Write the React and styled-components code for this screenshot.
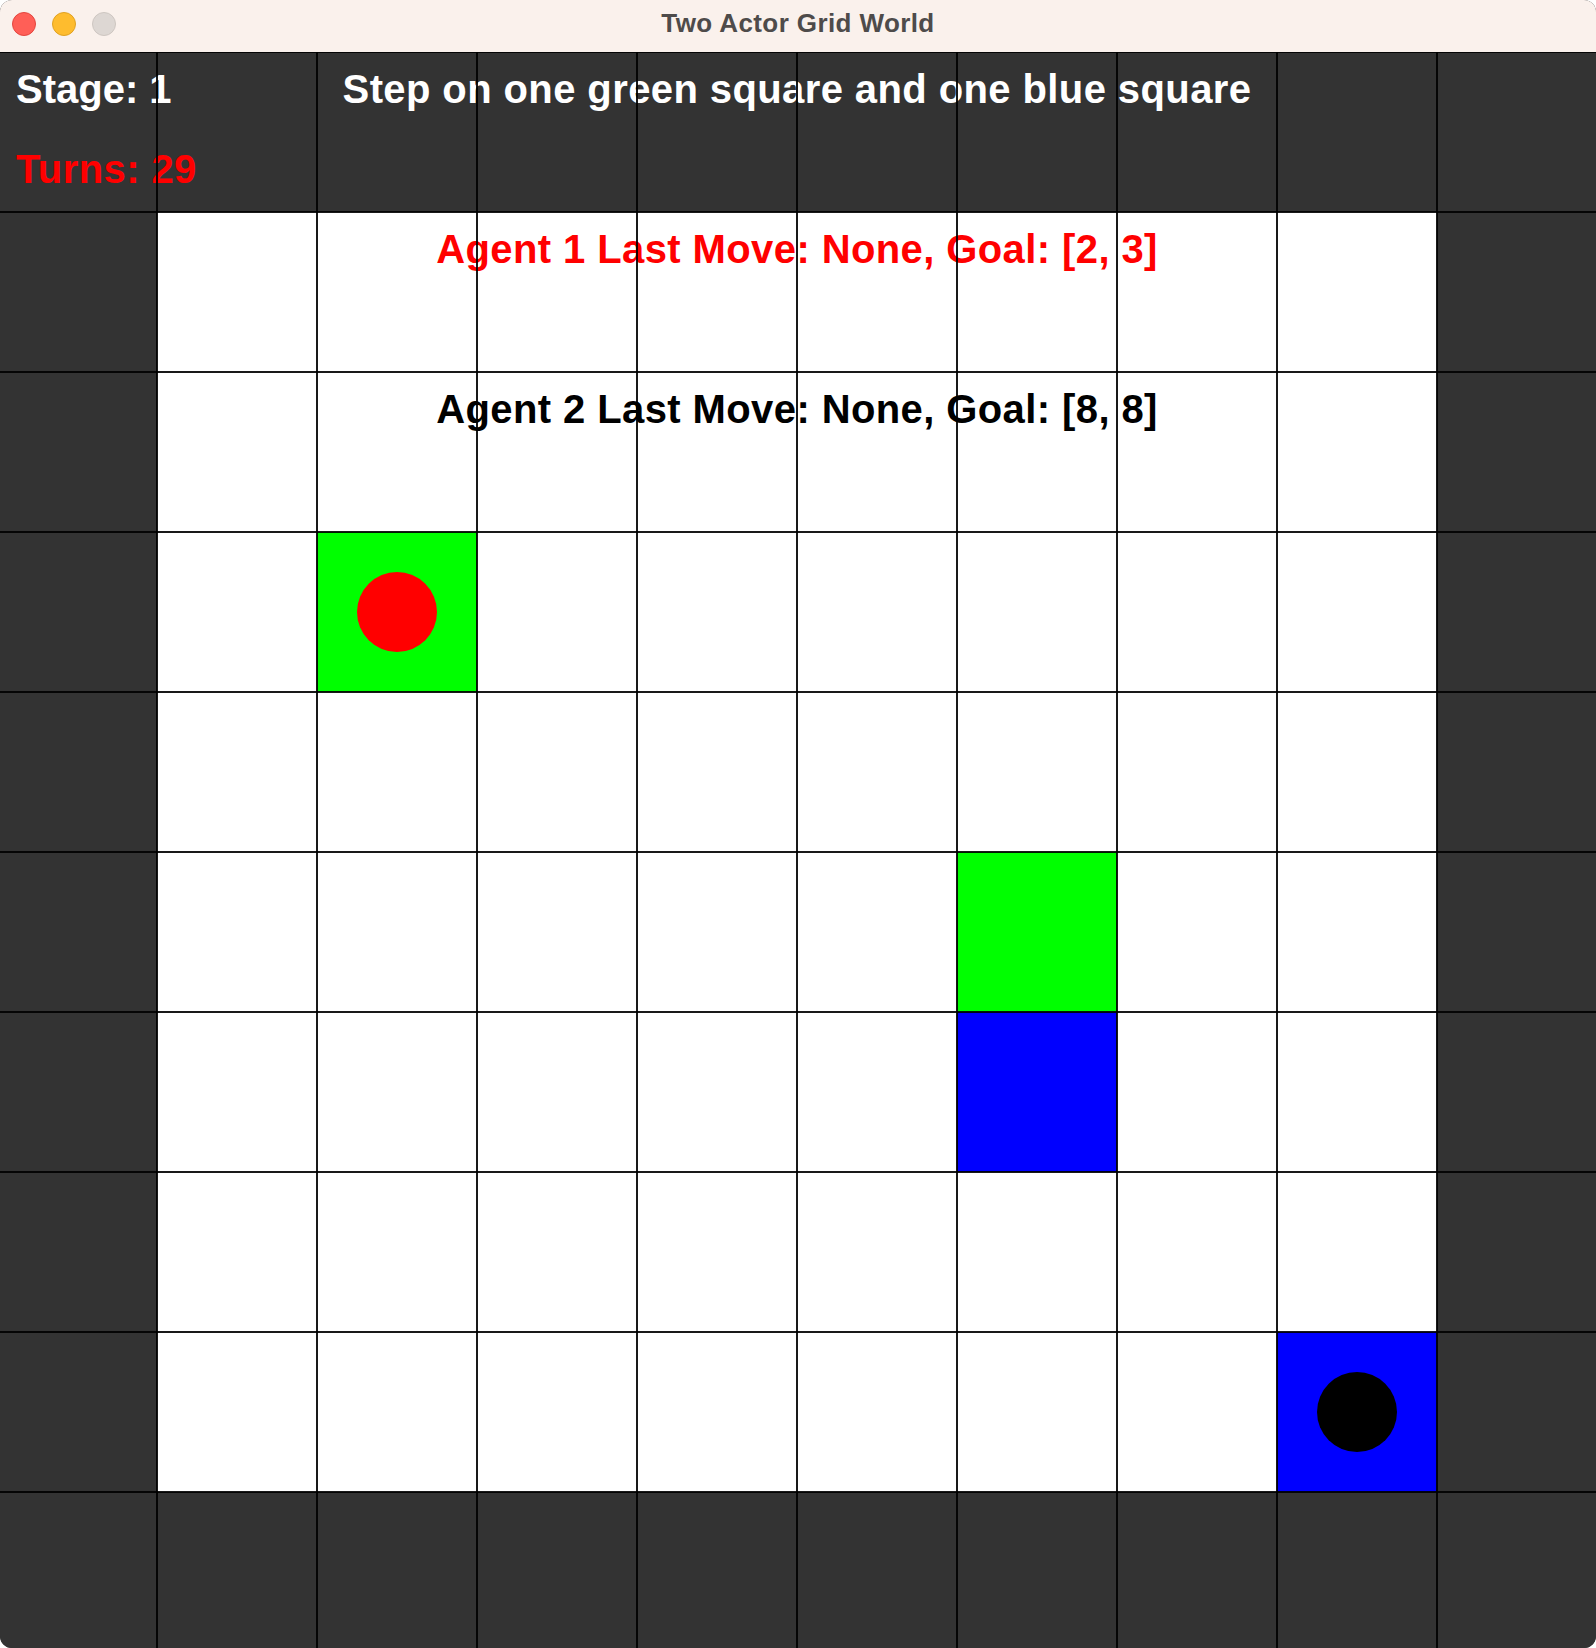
import React from 'react'
import styled, { createGlobalStyle } from 'styled-components'

const CELL = 160
const SIZE = 10

// board layout: W = wall, . = floor, G = green goal, B = blue goal
const LAYOUT = [
    'WWWWWWWWWW',
    'W........W',
    'W........W',
    'W.G......W',
    'W........W',
    'W.....G..W',
    'W.....B..W',
    'W........W',
    'W.......BW',
    'WWWWWWWWWW',
]

const AGENTS = [
    { row: 3, col: 2, color: '#ff0000' },
    { row: 8, col: 8, color: '#000000' },
]

const KIND = { W: 'wall', '.': 'floor', G: 'green', B: 'blue' }

function App() {
    return (
        <>
            <GlobalStyle />
            <Window>
                <TitleBar>
                    <Lights>
                        <Light $color="#ff5f57" $edge="#e2463f" />
                        <Light $color="#febc2e" $edge="#dfa123" />
                        <Light $color="#ddd7d3" $edge="#cdc6c1" />
                    </Lights>
                    <Title>Two Actor Grid World</Title>
                </TitleBar>
                <BoardArea>
                    <Board>
                        {LAYOUT.map((line, r) =>
                            line.split('').map((ch, c) => {
                                const agent = AGENTS.find(a => a.row === r && a.col === c)
                                return (
                                    <Cell key={`${r}-${c}`} $kind={KIND[ch]}>
                                        {agent && <Token $color={agent.color} />}
                                    </Cell>
                                )
                            })
                        )}
                        <Hud>
                            <HudLine $row={1} $align="start" $color="#ffffff" $spacing="0px">Stage: 1</HudLine>
                            <HudLine $row={1} $align="center" $color="#ffffff">Step on one green square and one blue square</HudLine>
                            <HudLine $row={2} $align="start" $color="#ff0000">Turns: 29</HudLine>
                            <HudLine $row={3} $align="center" $color="#ff0000">Agent 1 Last Move: None, Goal: [2, 3]</HudLine>
                            <HudLine $row={4} $align="center" $color="#000000">Agent 2 Last Move: None, Goal: [8, 8]</HudLine>
                        </Hud>
                        <GridLines />
                    </Board>
                </BoardArea>
            </Window>
        </>
    )
}

export default App

const GlobalStyle = createGlobalStyle`
    html, body {
        margin: 0;
        padding: 0;
        background: #ffffff;
    }
    body {
        font-family: "Liberation Sans", Arial, sans-serif;
    }
`

const Window = styled.div`
    width: 1596px;
    height: 1648px;
    display: flex;
    flex-direction: column;
    border-radius: 12px;
    overflow: hidden;
    background: #333333;
`

const TitleBar = styled.div`
    flex: 0 0 52px;
    display: grid;
    grid-template-columns: 1fr auto 1fr;
    align-items: start;
    background: #faf1ec;
`

const Lights = styled.div`
    display: flex;
    gap: 16px;
    padding: 12px 0 0 12px;
`

const Light = styled.span`
    width: 24px;
    height: 24px;
    box-sizing: border-box;
    border-radius: 50%;
    background: ${p => p.$color};
    border: 1px solid ${p => p.$edge};
`

const Title = styled.div`
    padding-top: 8px;
    font-size: 26px;
    line-height: 30px;
    font-weight: 700;
    letter-spacing: 0.4px;
    color: #4e4b4a;
`

const BoardArea = styled.div`
    flex: 1;
    overflow: hidden;
`

const Board = styled.div`
    position: relative;
    margin-left: -3px;
    width: ${CELL * SIZE}px;
    display: grid;
    grid-template-columns: repeat(${SIZE}, ${CELL}px);
    grid-template-rows: repeat(${SIZE}, ${CELL}px);
`

const Cell = styled.div`
    display: flex;
    align-items: center;
    justify-content: center;
    background: ${p =>
        p.$kind === 'wall' ? '#333333'
        : p.$kind === 'green' ? '#00ff00'
        : p.$kind === 'blue' ? '#0000ff'
        : '#ffffff'};
`

const Token = styled.span`
    width: 80px;
    height: 80px;
    border-radius: 50%;
    background: ${p => p.$color};
`

const Hud = styled.div`
    position: absolute;
    inset: 0;
    display: grid;
    grid-template-columns: 1fr;
    grid-template-rows: 80px 80px 160px 160px;
    align-content: start;
    padding-left: 19px;
    pointer-events: none;
`

const HudLine = styled.div`
    grid-row: ${p => p.$row};
    grid-column: 1;
    justify-self: ${p => p.$align};
    align-self: start;
    margin-left: ${p => (p.$align === 'center' ? '-19px' : '0')};
    font-size: 40px;
    line-height: 74px;
    font-weight: 700;
    letter-spacing: ${p => p.$spacing || '0.4px'};
    white-space: nowrap;
    color: ${p => p.$color};
`

const GridLines = styled.div`
    position: absolute;
    inset: 0;
    pointer-events: none;
    background-image:
        linear-gradient(to right, rgba(0, 0, 0, 0.9) 2px, transparent 2px),
        linear-gradient(to bottom, rgba(0, 0, 0, 0.9) 2px, transparent 2px);
    background-size: ${CELL}px ${CELL}px;
    background-position: -1px -1px;
`
